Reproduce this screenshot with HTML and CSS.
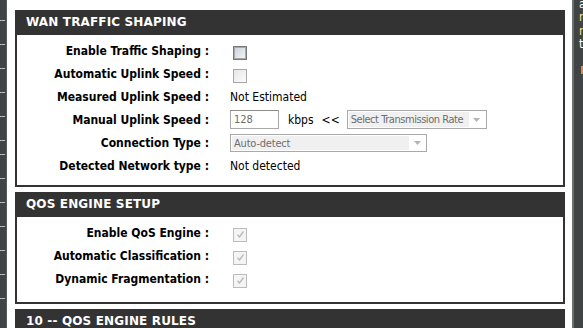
FILE: index.html
```html
<!DOCTYPE html>
<html lang="en">
<head>
    <meta charset="UTF-8">
    <meta name="viewport" content="width=device-width, initial-scale=1.0">
    <title>QoS Engine</title>
    <link rel="stylesheet" href="styles.css">
</head>
<body>
    <div class="page">
        <ul class="side-nav">
            <li class="nav-first"></li>
            <li></li>
            <li></li>
            <li></li>
            <li></li>
            <li></li>
            <li class="nav-short"></li>
            <li></li>
            <li></li>
            <li></li>
            <li></li>
            <li></li>
            <li></li>
        </ul>

        <main class="content">
            <section class="box">
                <h2>WAN TRAFFIC SHAPING</h2>
                <div class="box-body">
                    <div class="row">
                        <label>Enable Traffic Shaping :</label>
                        <div class="field"><span class="check check-focus"></span></div>
                    </div>
                    <div class="row">
                        <label>Automatic Uplink Speed :</label>
                        <div class="field"><span class="check"></span></div>
                    </div>
                    <div class="row">
                        <label>Measured Uplink Speed :</label>
                        <div class="field">Not Estimated</div>
                    </div>
                    <div class="row">
                        <label>Manual Uplink Speed :</label>
                        <div class="field">
                            <div class="text-input">128</div>
                            <span class="unit">kbps</span>
                            <span class="arrows">&lt;&lt;</span>
                            <div class="select select-rate">
                                <span class="select-text">Select Transmission Rate</span>
                                <span class="select-arrow">
                                    <svg width="7" height="4" viewBox="0 0 7 4"><path d="M0 0h7L3.5 4z" fill="#b4b4b4"/></svg>
                                </span>
                            </div>
                        </div>
                    </div>
                    <div class="row">
                        <label>Connection Type :</label>
                        <div class="field">
                            <div class="select select-conn">
                                <span class="select-text">Auto-detect</span>
                                <span class="select-arrow">
                                    <svg width="7" height="4" viewBox="0 0 7 4"><path d="M0 0h7L3.5 4z" fill="#b4b4b4"/></svg>
                                </span>
                            </div>
                        </div>
                    </div>
                    <div class="row">
                        <label>Detected Network type :</label>
                        <div class="field">Not detected</div>
                    </div>
                </div>
            </section>

            <section class="box box-qos">
                <h2>QOS ENGINE SETUP</h2>
                <div class="box-body">
                    <div class="row">
                        <label>Enable QoS Engine :</label>
                        <div class="field"><span class="check check-off"><svg width="9" height="9" viewBox="0 0 9 9"><path d="M1.5 4.8l2 2.2 4-5.5" fill="none" stroke="#b8b8b8" stroke-width="1.3"/></svg></span></div>
                    </div>
                    <div class="row">
                        <label>Automatic Classification :</label>
                        <div class="field"><span class="check check-off"><svg width="9" height="9" viewBox="0 0 9 9"><path d="M1.5 4.8l2 2.2 4-5.5" fill="none" stroke="#b8b8b8" stroke-width="1.3"/></svg></span></div>
                    </div>
                    <div class="row">
                        <label>Dynamic Fragmentation :</label>
                        <div class="field"><span class="check check-off"><svg width="9" height="9" viewBox="0 0 9 9"><path d="M1.5 4.8l2 2.2 4-5.5" fill="none" stroke="#b8b8b8" stroke-width="1.3"/></svg></span></div>
                    </div>
                </div>
            </section>

            <section class="box">
                <h2>10 -- QOS ENGINE RULES</h2>
            </section>
        </main>

        <aside class="hints">
            <p>a</p>
            <p class="hint-link">n</p>
            <p class="hint-link">n</p>
            <p>t</p>
            <span class="hint-mark"></span>
        </aside>
    </div>
</body>
</html>
```

FILE: styles.css
```css
* {
    margin: 0;
    padding: 0;
    box-sizing: border-box;
}
body {
    background: #fff;
    font-family: "DejaVu Sans Condensed", "DejaVu Sans", sans-serif;
    font-stretch: condensed;
    font-size: 12px;
    color: #000;
    overflow: hidden;
}
.page {
    display: flex;
    height: 328px;
}

/* left menu strip, only the edge is visible */
.side-nav {
    list-style: none;
    width: 7px;
    background: #404444;
    border-right: 1px solid #565a5a;
    flex-shrink: 0;
}
.side-nav li {
    height: 24px;
    border-bottom: 1px solid #b9bcbc;
    width: 5px;
}
.side-nav .nav-first {
    height: 21px;
}
.side-nav .nav-short {
    height: 14px;
}

.content {
    width: 550px;
    margin: 10px 7px 0 8px;
    flex-shrink: 0;
}
.box {
    border: 2px solid #333;
    border-top: 0;
    background: #fff;
    margin-bottom: 5px;
}
.box h2 {
    height: 25px;
    line-height: 25px;
    background: #333;
    color: #fff;
    font-family: "DejaVu Sans", sans-serif;
    font-stretch: normal;
    font-size: 12px;
    font-weight: bold;
    letter-spacing: 0.15px;
    margin: 0 -2px;
    padding-left: 11px;
}
.box-body {
    padding: 4px 0 8px;
}
.box-qos .box-body {
    padding-bottom: 12px;
}

.row {
    display: grid;
    grid-template-columns: 192px 1fr;
    column-gap: 21px;
    height: 23px;
    align-items: center;
}
.row label {
    font-weight: bold;
    text-align: right;
    white-space: nowrap;
}
.field {
    display: flex;
    align-items: center;
    white-space: nowrap;
}

.check {
    display: flex;
    align-items: center;
    justify-content: center;
    width: 14px;
    height: 14px;
    margin: 4px 0 0 3px;
    border: 1px solid #a6a6a6;
    background: linear-gradient(135deg, #e6e6e6, #fbfbfb);
}
.check-focus {
    border-color: #777;
    box-shadow: inset 0 0 0 1px #a9a9a9;
    background: linear-gradient(135deg, #c9d0db, #f5f6f8);
}
.check-off {
    border-color: #bcbcbc;
    background: #f4f4f4;
}

.text-input {
    width: 49px;
    height: 19px;
    border: 1px solid #a8a8a8;
    border-top-color: #8e8e8e;
    padding-left: 3px;
    line-height: 17px;
    font-size: 11px;
    color: #6d6d6d;
}
.unit {
    margin-left: 9px;
}
.arrows {
    margin-left: 8px;
}

.select {
    display: flex;
    height: 19px;
    border: 1px solid #a9a9a9;
    padding: 1px;
    background: #fff;
    font-size: 11px;
    letter-spacing: -0.2px;
    color: #6d6d6d;
}
.select-rate {
    width: 140px;
    margin-left: 7px;
    letter-spacing: -0.45px;
}
.select-conn {
    width: 197px;
    height: 18px;
}
.select-text {
    flex: 1;
    background: #f0f0f0;
    padding-left: 2px;
    line-height: 15px;
    overflow: hidden;
}
.select-arrow {
    width: 16px;
    display: flex;
    align-items: center;
    justify-content: center;
}

/* right help column, clipped */
.hints {
    flex: 1;
    background: #404444;
    border-left: 2px solid #6b6f6f;
    padding: 0 0 0 5px;
    margin-top: -2px;
    color: #fff;
    font-size: 12px;
    line-height: 13.4px;
    overflow: hidden;
}
.hints p {
    white-space: nowrap;
}
.hints .hint-link {
    color: #ffe3a0;
}
.hint-mark {
    display: block;
    width: 4px;
    height: 8px;
    margin: 14px 0 0 2px;
    background: #e0874a;
}
```
